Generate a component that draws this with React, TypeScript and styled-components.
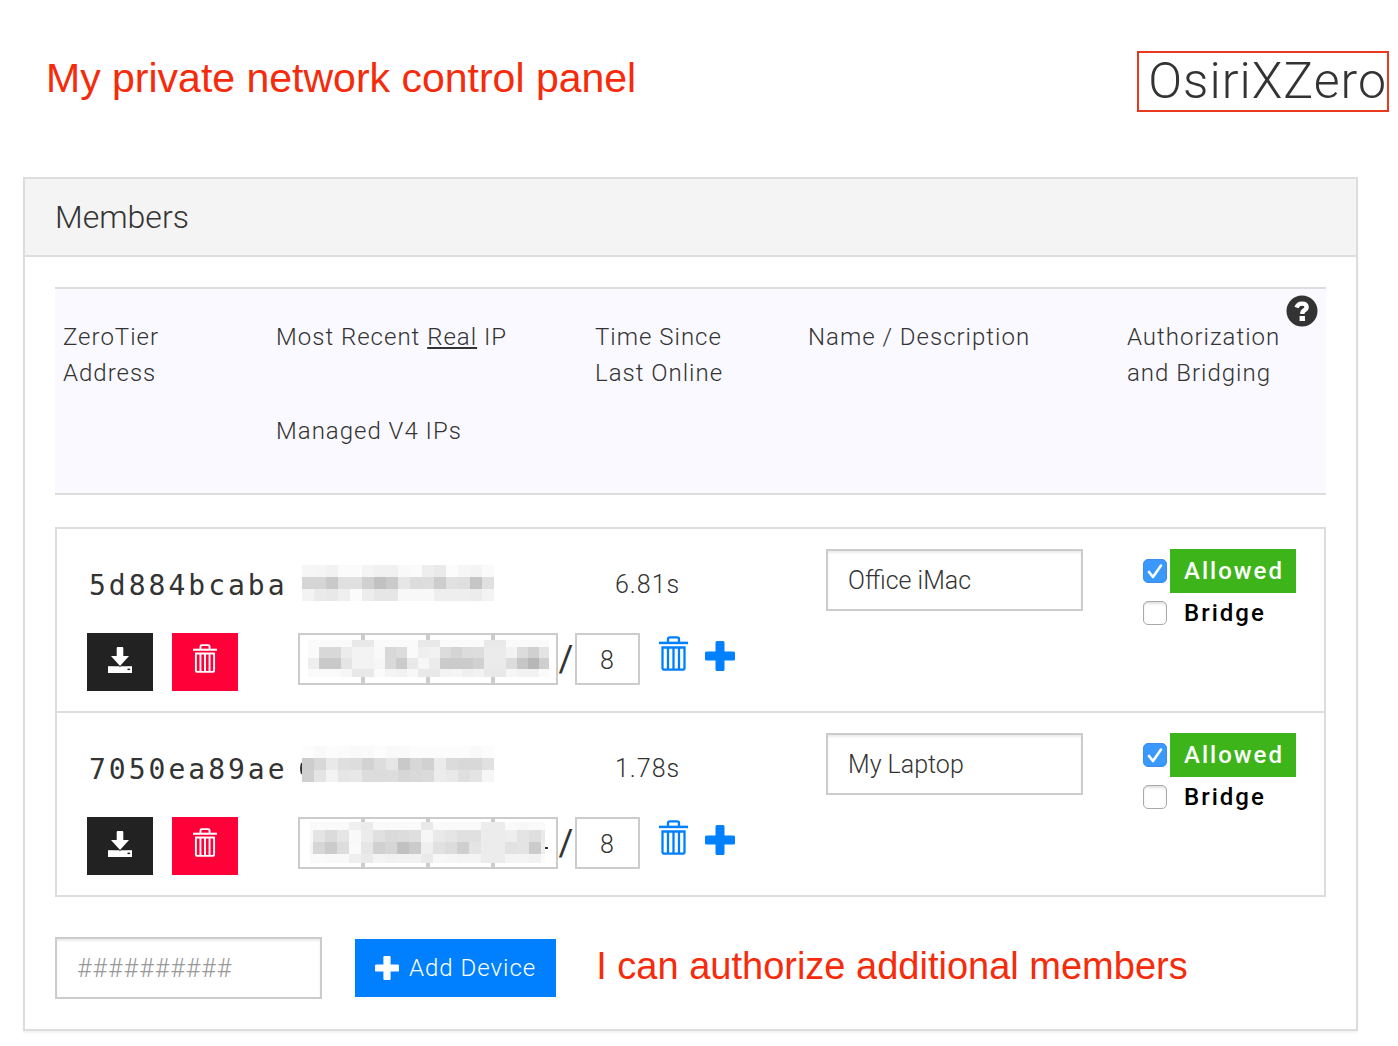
import React, { useState } from "react";
import styled, { createGlobalStyle } from "styled-components";

const light = `"Roboto", "Open Sans", sans-serif`;

const GlobalStyle = createGlobalStyle`
  *, *::before, *::after { box-sizing: border-box; }
  body {
    margin: 0;
    background: #fff;
    color: #333;
    font: 300 25px/36px ${light};
    letter-spacing: 1px;
  }
  button, input { font: inherit; letter-spacing: inherit; color: inherit; }
`;

const Page = styled.div`
  padding: 51px 0 14px;
`;

const TopBar = styled.header`
  display: flex;
  justify-content: space-between;
  align-items: flex-start;
  padding: 0 9px 0 46px;
`;

const Note = styled.p<{ $size: number }>`
  margin: 0;
  padding-bottom: 4px;
  font: 400 ${(p) => p.$size}px/54px "Liberation Sans", Arial, sans-serif;
  letter-spacing: normal;
  color: #f52b0b;
`;

const NetworkName = styled.h1`
  margin: 0;
  padding: 0 0 0 9px;
  border: 2px solid #e8391f;
  font-size: 50px;
  font-weight: 300;
  line-height: 57px;
`;

const Panel = styled.section`
  margin: 65px 40px 0 23px;
  border: 2px solid #ddd;
  box-shadow: 0 2px 2px rgba(0, 0, 0, 0.05);
`;

const PanelHeading = styled.h2`
  margin: 0;
  padding: 0 30px;
  border-bottom: 2px solid #ddd;
  background: #f4f4f4;
  font-size: 32px;
  font-weight: 300;
  line-height: 76px;
  letter-spacing: normal;
`;

const PanelBody = styled.div`
  padding: 30px;
`;

const MemberTable = styled.table`
  display: block;
`;

const TableHead = styled.thead`
  display: block;
  margin-bottom: 32px;
  border: solid #ddd;
  border-width: 2px 0;
  background: #faf9ff;
`;

const HeadRow = styled.tr`
  position: relative;
  display: grid;
  grid-template-columns: 213fr 319fr 213fr 319fr 207fr;
  padding: 30px 0 44px;
`;

const HeadCell = styled.th`
  display: flex;
  flex-direction: column;
  gap: 58px;
  padding: 0 8px;
  font-size: 24px;
  font-weight: 300;
  text-align: left;
`;

const HelpButton = styled.button`
  position: absolute;
  top: 6px;
  right: 8px;
  padding: 0;
  border: 0;
  background: none;
  line-height: 0;
  cursor: pointer;
`;

const TableBody = styled.tbody`
  display: block;
  border: 2px solid #ddd;
`;

const MemberRow = styled.tr`
  display: grid;
  grid-template-columns: 211fr 317fr 211fr 317fr 153fr;
  padding: 20px 28px 20px 30px;

  & + & { border-top: 2px solid #ddd; }
`;

const Cell = styled.td`
  display: flex;
  flex-direction: column;
  gap: 12px;
  min-width: 0;
  padding: 0;
`;

const CellLine = styled.div`
  display: flex;
  align-items: center;
  height: 72px;
`;

const Address = styled.span`
  padding: 2px 0 0 2px;
  font: 400 28px/36px "DejaVu Sans Mono", monospace;
  letter-spacing: 3px;
`;

const Actions = styled.div`
  display: flex;
  gap: 19px;
`;

const SquareButton = styled.button<{ $tone: string }>`
  display: flex;
  align-items: flex-end;
  justify-content: center;
  width: 66px;
  height: 58px;
  padding: 0 0 18px;
  border: 0;
  background: ${(p) => p.$tone};
  color: #fff;
  cursor: pointer;
`;

const AddressEditor = styled.div`
  display: flex;
  align-items: flex-start;
`;

const Octets = styled.div`
  position: relative;
  display: flex;
  flex: none;
`;

const SmallInput = styled.input`
  flex: none;
  width: 65px;
  height: 52px;
  padding: 2px 0 0;
  border: 2px solid #ccc;
  border-radius: 0;
  background: #fff;
  text-align: center;
  outline: none;
`;

const Slash = styled.span`
  flex: none;
  width: 17px;
  font-size: 36px;
  font-weight: 400;
  line-height: 52px;
  text-align: center;
`;

const IconButton = styled.button`
  display: flex;
  flex: none;
  height: 38px;
  align-items: flex-end;
  margin-left: 17px;
  padding: 0;
  border: 0;
  background: none;
  color: #0080ff;
  cursor: pointer;

  &:first-of-type { margin-left: 19px; }
`;

const TextField = styled.input<{ $width: number }>`
  width: ${(p) => p.$width}px;
  height: 62px;
  padding: 0 20px;
  border: 2px solid #ccc;
  border-radius: 0;
  background: #fff;
  box-shadow: inset 0 2px 2px rgba(0, 0, 0, 0.08);
  letter-spacing: normal;
  outline: none;

  &::placeholder { color: #999; opacity: 1; letter-spacing: 1px; }
`;

const CheckRow = styled.div`
  display: flex;
  align-items: center;
  gap: 3px;
`;

const CheckList = styled.div`
  display: flex;
  flex-direction: column;
`;

const Check = styled.input`
  flex: none;
  appearance: none;
  width: 24px;
  height: 24px;
  margin: 0;
  border: 1px solid #aaa;
  border-radius: 5px;
  background: #fff;
  box-shadow: inset 0 2px 2px rgba(0, 0, 0, 0.12);

  &:checked {
    border-color: #3b8ef0;
    background: #3b99fc
      url("data:image/svg+xml,%3Csvg xmlns='http://www.w3.org/2000/svg' viewBox='0 0 22 22'%3E%3Cpath d='M5 12l4 5L17 5.500' fill='none' stroke='white' stroke-width='2.600' stroke-linecap='round' stroke-linejoin='round'/%3E%3C/svg%3E")
      center / 22px 22px no-repeat;
    box-shadow: none;
  }
`;

const CheckLabel = styled.label<{ $on?: boolean }>`
  flex: 1;
  padding: 0 0 0 14px;
  background: ${(p) => (p.$on ? "#3db51a" : "transparent")};
  color: ${(p) => (p.$on ? "#fff" : "#000")};
  font-size: 24px;
  font-weight: 500;
  line-height: ${(p) => (p.$on ? 44 : 40)}px;
  letter-spacing: 2px;
`;

const AddForm = styled.form`
  display: flex;
  align-items: center;
  margin-top: 40px;
`;

const AddButton = styled.button`
  display: flex;
  align-items: center;
  gap: 10px;
  height: 58px;
  margin: 0 40px 0 33px;
  padding: 0 20px;
  border: 0;
  background: #0080ff;
  color: #fff;
  font-size: 24px;
  cursor: pointer;
`;

const Cover = styled.svg<{ $left: number; $top: number }>`
  position: absolute;
  left: ${(p) => p.$left}px;
  top: ${(p) => p.$top}px;
  pointer-events: none;
`;

function TrashIcon({ height }: { height: number }) {
  return (
    <svg width={Math.round((height * 29) / 35)} height={height} viewBox="0 0 29 35" fill="none" stroke="currentColor" strokeWidth="2.300" aria-hidden="true">
      <path d="M0 6.900H29" strokeWidth="2.500" />
      <path d="M9 6V3Q9 1.300 10.800 1.300H18.200Q20 1.300 20 3V6" />
      <path d="M3.500 11.500H25.500V31.700Q25.500 33.700 23.500 33.700H5.500Q3.500 33.700 3.500 31.700Z" />
      <path d="M9 12V33M14.500 12V33M20 12V33" />
    </svg>
  );
}

function PlusIcon({ size }: { size: number }) {
  return (
    <svg width={size} height={size} viewBox="0 0 30 30" fill="currentColor" aria-hidden="true">
      <rect x="10.500" y="0" width="9" height="30" rx="1.500" />
      <rect x="0" y="10.500" width="30" height="9" rx="1.500" />
    </svg>
  );
}

function DownloadIcon() {
  return (
    <svg width="24" height="26" viewBox="0 0 24 26" aria-hidden="true">
      <path d="M0 19.200H24V26H0Z" fill="#fff" />
      <path d="M9.700 0H14.300Q15.300 0 15.300 1V9H21L12 19L3 9H8.700V1Q8.700 0 9.700 0Z" fill="#fff" />
      <path d="M4.500 18.600H10.500L12 20L13.500 18.600H19.500" fill="none" stroke="#222" strokeWidth="0.600" />
      <rect x="19.500" y="21.600" width="2.600" height="1.500" fill="#222" />
    </svg>
  );
}

function HelpIcon() {
  return (
    <svg width="32" height="32" viewBox="0 0 32 32" aria-hidden="true">
      <circle cx="16" cy="16" r="15.500" fill="#333" />
      <path d="M10.500 12.500Q12 8.600 16 8.600Q20.600 8.600 20.600 12.200Q20.600 14 18.200 15.400Q16.300 16.600 16.300 19" fill="none" stroke="#fff" strokeWidth="4.400" />
      <rect x="13.600" y="21" width="5.400" height="5" fill="#fff" />
    </svg>
  );
}

type Mosaic = { cell: number; heights: number[]; rows: string[]; left?: number; width?: number };

/* Each row is a run of two-digit hex grey levels, one per cell. */
function MosaicCells({ cell, heights, rows }: Mosaic) {
  return (
    <>
      {rows.map((row, r) => {
        const y = heights.slice(0, r).reduce((a, b) => a + b, 0);
        return row.split(" ").map((g, c) => (
          <rect key={r + "-" + c} x={c * cell} y={y} width={cell} height={heights[r]} fill={"#" + g + g + g} shapeRendering="crispEdges" />
        ));
      })}
    </>
  );
}

const realIps: string[][] = [
  [
    "f6 f5 f2 fb fb f4 f1 f1 f9 fb ee ea fc f6 f4 fa",
    "d5 d5 c9 e0 e0 d0 c1 ca e6 dc dd cd e1 df c5 e0",
    "f3 ea e8 ef fb ec e6 e6 f8 f8 f8 ee ee ee ec f3",
  ],
  [
    "fd f9 fc fb f9 fa fd f9 fa fc fc fc fc fc f9 fc",
    "cd d8 e9 df dd d2 dd e6 c9 d7 d1 eb db d8 d8 e1",
    "d0 e4 f3 e6 e8 dc dc dd d7 d9 db ec e9 df e4 f6",
  ],
];

const managedIps: Required<Mosaic>[] = [
  {
    cell: 11,
    heights: [7, 11, 11, 8],
    left: 0,
    width: 241,
    rows: [
      "fa fa fa fa e9 e9 fa fa fa fa e9 e9 fa fa fa fa e9 e9 fa fa fa fa",
      "fa d8 d8 ec f3 f3 f9 d8 dc fa ef f2 dc d4 dc dd eb eb f3 dc d0 e4",
      "ee c9 c9 e5 f3 f3 f6 d9 cb e9 f7 ec cb cb cb d1 eb eb dc c6 b7 cf",
      "fa fa fa f6 e9 e9 fa f4 f2 f8 e9 e9 f3 f5 ef f2 e9 e9 f6 f2 f2 fa",
    ],
  },
  {
    cell: 12,
    heights: [8, 12, 12, 9],
    left: 9,
    width: 235,
    rows: [
      "fa fa fa fa ef eb fa fa fa fa e9 fa fa fa fa ec ec fa f8 fa fa",
      "f8 e4 db e5 f9 ec e0 da dc df f6 e9 e5 e0 e0 ec ec ee e4 df ea",
      "f4 d6 cb dd fa e6 d0 d6 c1 cb ef e1 dc cf e4 ec ec e2 e4 cb ee",
      "f9 fa f9 f9 ef ea f4 f1 f2 f2 ea f7 f6 f4 f4 ec ec f4 f4 f2 fa",
    ],
  },
];

const members = [
  { id: "5d884bcaba", seen: "6.81s", name: "Office iMac" },
  { id: "7050ea89ae", seen: "1.78s", name: "My Laptop" },
];

function Member({ index }: { index: number }) {
  const m = members[index];
  const managed = managedIps[index];
  const [allowed, setAllowed] = useState(true);
  const [bridge, setBridge] = useState(false);

  return (
    <MemberRow>
      <Cell>
        <CellLine><Address>{m.id}</Address></CellLine>
        <Actions>
          <SquareButton $tone="#222" type="button" aria-label="Download"><DownloadIcon /></SquareButton>
          <SquareButton $tone="#ff0039" type="button" aria-label="Delete member"><TrashIcon height={29} /></SquareButton>
        </Actions>
      </Cell>
      <Cell>
        <CellLine>
          <svg width="196" height="46" viewBox={index === 0 ? "-4 -3 196 46" : "-4 0 196 46"} role="img" aria-label="Hidden real IP">
            {index === 1 && <path d="M0 17Q-2 22 0 28" fill="none" stroke="#333" strokeWidth="2" />}
            <MosaicCells cell={12} heights={[12, 12, 12]} rows={realIps[index]} />
          </svg>
        </CellLine>
        <AddressEditor>
          <Octets>
            {[1, 2, 3, 4].map((n) => (
              <SmallInput key={n} aria-label={`Managed IP octet ${n}`} />
            ))}
            <Cover
              $left={index === 0 ? 10 : 12}
              $top={index === 0 ? 7 : 5}
              width={managed.width + 4}
              height="42"
              viewBox={`${managed.left} 0 ${managed.width + 4} 42`}
              aria-hidden="true"
            >
              <svg x={managed.left} width={managed.width} height="42" viewBox={`${managed.left} 0 ${managed.width} 42`}>
                <MosaicCells {...managed} />
              </svg>
              {index === 1 && <path d="M244 26H247" stroke="#333" strokeWidth="2" />}
            </Cover>
          </Octets>
          <Slash>/</Slash>
          <SmallInput defaultValue="8" aria-label="Prefix length" />
          <IconButton type="button" aria-label="Remove managed IP"><TrashIcon height={35} /></IconButton>
          <IconButton type="button" aria-label="Add managed IP"><PlusIcon size={30} /></IconButton>
        </AddressEditor>
      </Cell>
      <Cell><CellLine>{m.seen}</CellLine></Cell>
      <Cell><TextField $width={257} defaultValue={m.name} aria-label="Name / Description" /></Cell>
      <Cell>
        <CheckList>
          <CheckRow>
            <Check type="checkbox" id={`allow-${m.id}`} checked={allowed} onChange={() => setAllowed(!allowed)} />
            <CheckLabel $on={allowed} htmlFor={`allow-${m.id}`}>Allowed</CheckLabel>
          </CheckRow>
          <CheckRow>
            <Check type="checkbox" id={`bridge-${m.id}`} checked={bridge} onChange={() => setBridge(!bridge)} />
            <CheckLabel htmlFor={`bridge-${m.id}`}>Bridge</CheckLabel>
          </CheckRow>
        </CheckList>
      </Cell>
    </MemberRow>
  );
}

export default function App() {
  return (
    <Page>
      <GlobalStyle />
      <TopBar>
        <Note $size={41}>My private network control panel</Note>
        <NetworkName>OsiriXZero</NetworkName>
      </TopBar>
      <Panel>
        <PanelHeading>Members</PanelHeading>
        <PanelBody>
          <MemberTable>
            <TableHead>
              <HeadRow>
                <HeadCell><span>ZeroTier<br />Address</span></HeadCell>
                <HeadCell>
                  <span>Most Recent <u>Real</u> IP</span>
                  <span>Managed V4 IPs</span>
                </HeadCell>
                <HeadCell><span>Time Since<br />Last Online</span></HeadCell>
                <HeadCell><span>Name / Description</span></HeadCell>
                <HeadCell>
                  <span>Authorization<br />and Bridging</span>
                  <HelpButton type="button" aria-label="Help"><HelpIcon /></HelpButton>
                </HeadCell>
              </HeadRow>
            </TableHead>
            <TableBody>
              {members.map((m, i) => <Member key={m.id} index={i} />)}
            </TableBody>
          </MemberTable>
          <AddForm onSubmit={(e) => e.preventDefault()}>
            <TextField $width={267} placeholder="##########" aria-label="Device address" />
            <AddButton type="submit"><PlusIcon size={24} />Add Device</AddButton>
            <Note $size={38}>I can authorize additional members</Note>
          </AddForm>
        </PanelBody>
      </Panel>
    </Page>
  );
}
